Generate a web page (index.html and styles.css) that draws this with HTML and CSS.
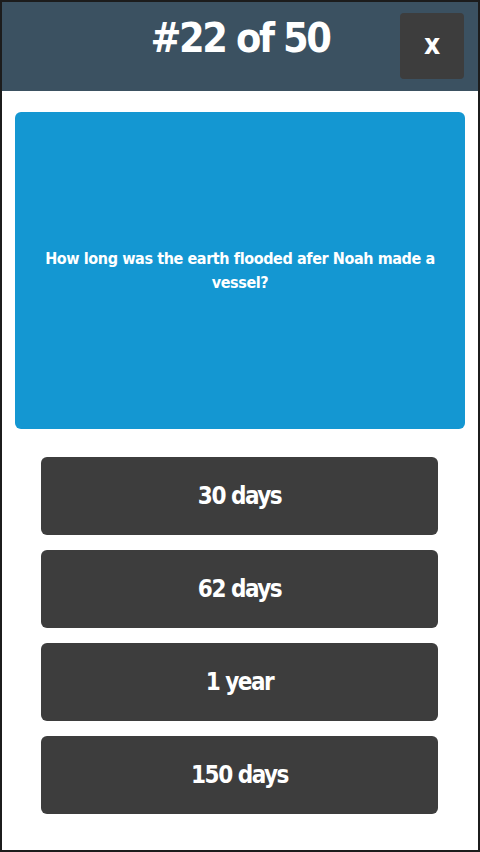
FILE: index.html
```html
<!DOCTYPE html>
<html>
<head>
<meta charset="utf-8">
<link rel="stylesheet" href="styles.css">
</head>
<body>
<div class="screen">
  <header class="topbar">
    <div class="spacer"></div>
    <h1 class="title">#22 of 50</h1>
    <div class="close-wrap"><button class="close">x</button></div>
  </header>
  <main class="content">
    <section class="question">
      <p>How long was the earth flooded afer Noah made a vessel?</p>
    </section>
    <div class="answers">
      <button class="answer">30 days</button>
      <button class="answer">62 days</button>
      <button class="answer">1 year</button>
      <button class="answer">150 days</button>
    </div>
  </main>
</div>
</body>
</html>
```
FILE: styles.css
```css
* { box-sizing: border-box; }
html, body { margin: 0; padding: 0; background: #fff; }
body { font-family: "DejaVu Sans Condensed", "DejaVu Sans", sans-serif; font-weight: bold; }
.screen {
  width: 480px;
  height: 852px;
  border: 2px solid #1c1c1c;
  background: #fff;
  display: flex;
  flex-direction: column;
}
.topbar {
  height: 89px;
  background: #3b5161;
  display: grid;
  grid-template-columns: 1fr auto 1fr;
  align-items: center;
}
.title {
  margin: 0;
  color: #fff;
  font-size: 41px;
  font-weight: bold;
  letter-spacing: -2.4px;
  line-height: 1;
  padding-bottom: 16px;
}
.close-wrap { display: flex; justify-content: flex-end; padding-right: 14px; padding-bottom: 1px; }
.close {
  width: 64px;
  height: 66px;
  border: none;
  border-radius: 4px;
  background: #3d3d3d;
  color: #fff;
  font-family: inherit;
  font-weight: bold;
  font-size: 28px;
  padding: 0 0 4px;
}
.content {
  padding: 21px 13px 0;
  display: flex;
  flex-direction: column;
}
.question {
  width: 450px;
  height: 317px;
  background: #1497d2;
  border-radius: 6px;
  display: flex;
  align-items: center;
  justify-content: center;
  padding: 0 18px;
}
.question p {
  margin: 0;
  color: #fff;
  text-align: center;
  font-size: 16px;
  line-height: 24px;
  letter-spacing: -0.4px;
}
.answers {
  margin-top: 28px;
  margin-left: 26px;
  width: 397px;
  display: flex;
  flex-direction: column;
  gap: 15px;
}
.answer {
  height: 78px;
  border: none;
  border-radius: 6px;
  background: #3d3d3d;
  color: #fff;
  font-family: inherit;
  font-weight: bold;
  font-size: 24px;
  letter-spacing: -1.5px;
  padding: 0;
}
```
